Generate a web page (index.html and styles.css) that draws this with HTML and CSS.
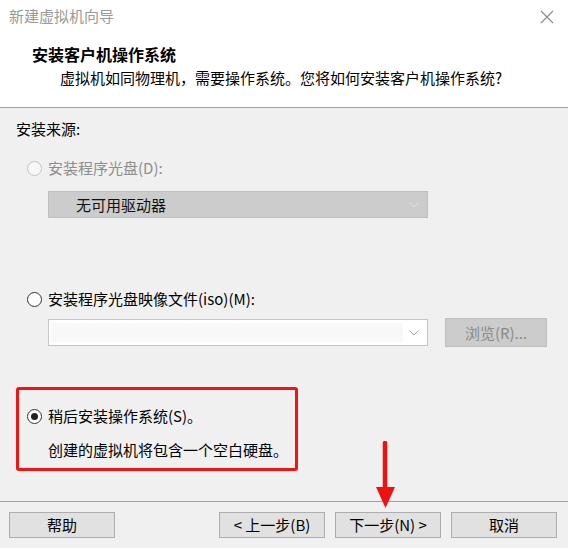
FILE: index.html
```html
<!DOCTYPE html>
<html>
<head>
  <meta charset="utf-8">
  <title>新建虚拟机向导</title>
  <link rel="stylesheet" href="styles.css">
</head>
<body>
  <div class="wizard">
    <div class="top">
      <div class="title-bar">
        <span class="title-text">新建虚拟机向导</span>
        <svg class="close-icon" width="14" height="14" viewBox="0 0 14 14">
          <path d="M1 1 L13 13 M13 1 L1 13" stroke="#8a8a8a" stroke-width="1.1" fill="none"/>
        </svg>
      </div>
      <div class="page-title">安装客户机操作系统</div>
      <div class="page-subtitle">虚拟机如同物理机，需要操作系统。您将如何安装客户机操作系统?</div>
    </div>

    <div class="content">
      <div class="group-label">安装来源:</div>

      <div class="radio-row disabled first-radio">
        <span class="radio"></span>
        <span>安装程序光盘(D):</span>
      </div>
      <div class="combo combo-disabled">
        <span class="combo-text">无可用驱动器</span>
        <svg class="combo-arrow" width="10" height="6" viewBox="0 0 10 6">
          <path d="M0.5 0.5 L5 5 L9.5 0.5" stroke="#e2e2e2" stroke-width="1" fill="none"/>
        </svg>
      </div>

      <div class="radio-row second-radio">
        <span class="radio"></span>
        <span>安装程序光盘映像文件(iso)(M):</span>
      </div>
      <div class="iso-row">
        <div class="combo combo-empty">
          <div class="combo-field"></div>
          <svg class="combo-arrow" width="10" height="6" viewBox="0 0 10 6">
            <path d="M0.5 0.5 L5 5 L9.5 0.5" stroke="#a8a8a8" stroke-width="1" fill="none"/>
          </svg>
        </div>
        <div class="browse-button">浏览(R)...</div>
      </div>

      <div class="highlight-box">
        <div class="radio-row">
          <span class="radio checked"></span>
          <span>稍后安装操作系统(S)。</span>
        </div>
        <div class="hint">创建的虚拟机将包含一个空白硬盘。</div>
      </div>
    </div>

    <div class="footer">
      <div class="button">帮助</div>
      <div class="button push-right">&lt; 上一步(B)</div>
      <div class="button">下一步(N) &gt;</div>
      <div class="button">取消</div>
    </div>

    <svg class="red-arrow" width="24" height="70" viewBox="0 0 24 70">
      <path d="M11 2 L11 48" stroke="#ee1111" stroke-width="4.5" stroke-linecap="round" fill="none"/>
      <polygon points="2,46 21,46 11.5,67" fill="#ee1111"/>
    </svg>
  </div>
</body>
</html>
```

FILE: styles.css
```css
html, body {
  margin: 0;
  padding: 0;
}
body {
  font-family: "Noto Sans CJK SC", "Noto Sans", sans-serif;
  font-size: 15px;
  color: #000;
  background: #f0f0f0;
}
.wizard {
  position: relative;
  width: 568px;
  height: 548px;
  display: flex;
  flex-direction: column;
  overflow: hidden;
}

/* header area */
.top {
  background: #fff;
  height: 108px;
  box-sizing: border-box;
  border-bottom: 1px solid #a0a0a0;
}
.title-bar {
  height: 32px;
  line-height: 32px;
  display: flex;
  align-items: center;
  justify-content: space-between;
  padding: 0 14px 0 9px;
}
.title-text {
  color: #9a9a9a;
}
.close-icon {
  display: block;
  margin-top: 2px;
}
.page-title {
  margin: 12px 0 0 32px;
  line-height: 20px;
  font-size: 16px;
  font-weight: bold;
}
.page-subtitle {
  margin: 4px 0 0 60px;
  line-height: 20px;
}

/* main content */
.content {
  flex: 1;
  padding: 11px 0 0 16px;
}
.group-label {
  line-height: 20px;
}
.radio-row {
  display: flex;
  align-items: center;
  line-height: 20px;
}
.radio {
  width: 13px;
  height: 13px;
  border: 1px solid #333;
  border-radius: 50%;
  background: #fff;
  margin: 0 6px 0 11px;
  position: relative;
  flex: none;
}
.radio.checked::after {
  content: "";
  position: absolute;
  left: 3px;
  top: 3px;
  width: 7px;
  height: 7px;
  border-radius: 50%;
  background: #222;
}
.disabled {
  color: #8d8d8d;
}
.disabled .radio {
  border-color: #c4c4c4;
  background: #f7f7f7;
}
.first-radio {
  margin-top: 19px;
}
.second-radio {
  margin-top: 71px;
}
.combo {
  width: 380px;
  height: 27px;
  box-sizing: border-box;
  margin-left: 32px;
  display: flex;
  align-items: center;
  position: relative;
}
.combo-disabled {
  margin-top: 13px;
  background: #cccccc;
  border: 1px solid #bfbfbf;
}
.combo-text {
  margin-left: 27px;
  color: #111;
}
.combo-arrow {
  position: absolute;
  right: 8px;
  top: 10px;
}
.iso-row {
  display: flex;
  align-items: center;
  margin-top: 9px;
}
.combo-empty {
  background: #fff;
  border: 1px solid #c6c6c6;
}
.combo-field {
  margin-left: 2px;
  width: 352px;
  height: 19px;
  background: #f8f8f8;
}
.browse-button {
  width: 102px;
  height: 29px;
  box-sizing: border-box;
  margin-left: 17px;
  background: #cccccc;
  border: 1px solid #bfbfbf;
  color: #8a8a8a;
  text-align: center;
  line-height: 27px;
}
.highlight-box {
  width: 282px;
  box-sizing: border-box;
  margin-top: 40px;
  border: 3px solid #f01414;
  border-radius: 3px;
  padding: 16px 0 8px 0;
}
.highlight-box .radio {
  margin-left: 8px;
}
.hint {
  margin: 14px 0 0 29px;
  line-height: 20px;
}

/* footer buttons */
.footer {
  height: 47px;
  box-sizing: border-box;
  border-top: 1px solid #a0a0a0;
  padding: 10px 11px 0 9px;
  display: flex;
  align-items: flex-start;
}
.button {
  width: 106px;
  height: 26px;
  box-sizing: border-box;
  background: #e1e1e1;
  border: 1px solid #adadad;
  text-align: center;
  line-height: 24px;
  margin-left: 10px;
}
.button:first-child {
  margin-left: 0;
}
.button.push-right {
  margin-left: auto;
}

/* annotation overlay */
.red-arrow {
  position: absolute;
  left: 374px;
  top: 441px;
}
```
